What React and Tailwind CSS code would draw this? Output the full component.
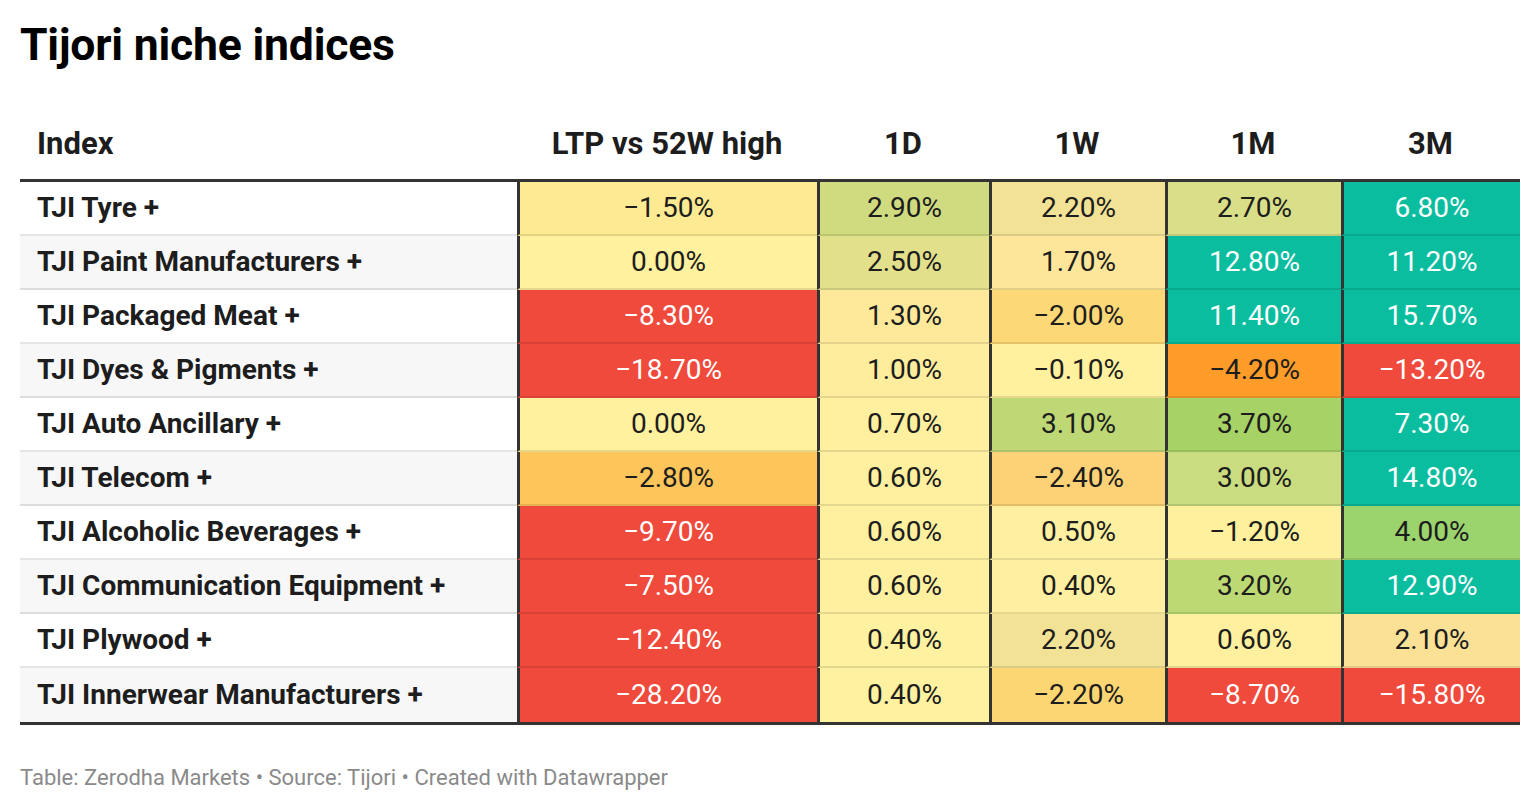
import React from "react";

const cols = ["LTP vs 52W high", "1D", "1W", "1M", "3M"];

const TEAL = "#0bbd9f";
const RED = "#ef4a3c";

// [value, background, light text?]
const rows = [
  {
    name: "TJI Tyre +",
    cells: [
      ["−1.50%", "#feea92"],
      ["2.90%", "#d0db80"],
      ["2.20%", "#f2e296"],
      ["2.70%", "#d9df88"],
      ["6.80%", TEAL, true],
    ],
  },
  {
    name: "TJI Paint Manufacturers +",
    cells: [
      ["0.00%", "#fff19e"],
      ["2.50%", "#e3e08c"],
      ["1.70%", "#fde69a"],
      ["12.80%", TEAL, true],
      ["11.20%", TEAL, true],
    ],
  },
  {
    name: "TJI Packaged Meat +",
    cells: [
      ["−8.30%", RED, true],
      ["1.30%", "#fee99a"],
      ["−2.00%", "#fdd877"],
      ["11.40%", TEAL, true],
      ["15.70%", TEAL, true],
    ],
  },
  {
    name: "TJI Dyes & Pigments +",
    cells: [
      ["−18.70%", RED, true],
      ["1.00%", "#feed9c"],
      ["−0.10%", "#fff19e"],
      ["−4.20%", "#fe9c2a"],
      ["−13.20%", RED, true],
    ],
  },
  {
    name: "TJI Auto Ancillary +",
    cells: [
      ["0.00%", "#fff19e"],
      ["0.70%", "#fef09e"],
      ["3.10%", "#bed876"],
      ["3.70%", "#a7d265"],
      ["7.30%", TEAL, true],
    ],
  },
  {
    name: "TJI Telecom +",
    cells: [
      ["−2.80%", "#fec55a"],
      ["0.60%", "#fef09f"],
      ["−2.40%", "#fdd277"],
      ["3.00%", "#c9dc7f"],
      ["14.80%", TEAL, true],
    ],
  },
  {
    name: "TJI Alcoholic Beverages +",
    cells: [
      ["−9.70%", RED, true],
      ["0.60%", "#fef09f"],
      ["0.50%", "#fef0a0"],
      ["−1.20%", "#fef09c"],
      ["4.00%", "#9bd36d"],
    ],
  },
  {
    name: "TJI Communication Equipment +",
    cells: [
      ["−7.50%", RED, true],
      ["0.60%", "#fef09f"],
      ["0.40%", "#fef0a0"],
      ["3.20%", "#bcd974"],
      ["12.90%", TEAL, true],
    ],
  },
  {
    name: "TJI Plywood +",
    cells: [
      ["−12.40%", RED, true],
      ["0.40%", "#fef1a0"],
      ["2.20%", "#f2e296"],
      ["0.60%", "#fef09e"],
      ["2.10%", "#fae196"],
    ],
  },
  {
    name: "TJI Innerwear Manufacturers +",
    cells: [
      ["−28.20%", RED, true],
      ["0.40%", "#fef1a0"],
      ["−2.20%", "#fdd674"],
      ["−8.70%", RED, true],
      ["−15.80%", RED, true],
    ],
  },
];

const grid = "grid grid-cols-[497px_300px_172px_176px_176px_179px]";

export default function App() {
  return (
    <div className="w-[1540px] h-[810px] bg-white px-[20px] pt-[20px] font-['Roboto',sans-serif] text-[#1d1d1d]">
      <h1 className="text-[44.5px] leading-[50px] font-bold text-black tracking-[-0.2px]">
        Tijori niche indices
      </h1>

      <div className="mt-[40px] w-[1500px]">
        <div className={`${grid} h-[72px] items-center border-b-[3px] border-[#333] text-[31px] font-bold`}>
          <div className="pl-[17px]">Index</div>
          {cols.map((c) => (
            <div key={c} className="text-center">
              {c}
            </div>
          ))}
        </div>

        <div className="border-b-[3px] border-[#333]">
          {rows.map((r, i) => (
            <div
              key={r.name}
              className={`${grid} h-[54px] ${i % 2 ? "bg-[#f7f7f7]" : "bg-white"}`}
            >
              <div
                className={`flex items-center pl-[17px] text-[28px] font-bold ${
                  i < rows.length - 1 ? "border-b-2 border-black/10" : ""
                }`}
              >
                {r.name}
              </div>
              {r.cells.map(([v, bg, light], j) => (
                <div
                  key={j}
                  className={`flex items-center justify-center border-l-[3px] border-l-[#333] text-[28px] ${
                    i < rows.length - 1 ? "border-b-2 border-b-black/10" : ""
                  } ${light ? "text-white" : "text-[#1d1d1d]"}`}
                  style={{ backgroundColor: bg }}
                >
                  {v}
                </div>
              ))}
            </div>
          ))}
        </div>
      </div>

      <p className="mt-[41px] text-[22px] leading-[24px] text-[#8a8a8a]">
        Table: Zerodha Markets • Source: Tijori • Created with Datawrapper
      </p>
    </div>
  );
}
